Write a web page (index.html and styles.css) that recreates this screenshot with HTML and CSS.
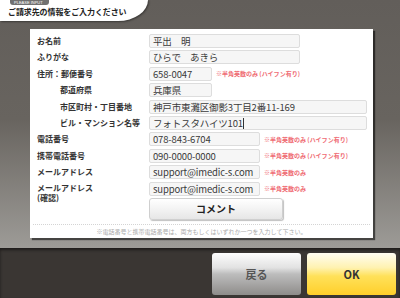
FILE: index.html
```
<!DOCTYPE html>
<html lang="ja">
<head>
    <meta charset="UTF-8">
    <title>ご請求先の情報をご入力ください</title>
    <link rel="stylesheet" href="styles.css">
</head>
<body>
    <div class="header">
        <div class="tab">
            <span class="tag">PLEASE INPUT</span>
            <h1>ご請求先の情報をご入力ください</h1>
        </div>
    </div>
    <div class="main">
        <div class="card">
            <div class="form">
                <div class="label">お名前</div>
                <div class="field"><span class="input w-name">平出　明</span></div>

                <div class="label">ふりがな</div>
                <div class="field"><span class="input w-name">ひらで　あきら</span></div>

                <div class="label">住所：郵便番号</div>
                <div class="field"><span class="input w-zip">658-0047</span><span class="note">※半角英数のみ (ハイフン有り)</span></div>

                <div class="label sub">都道府県</div>
                <div class="field"><span class="input w-zip">兵庫県</span></div>

                <div class="label sub">市区町村・丁目番地</div>
                <div class="field"><span class="input w-long">神戸市東灘区御影3丁目2番11-169</span></div>

                <div class="label sub">ビル・マンション名等</div>
                <div class="field"><span class="input w-long">フォトスタハイツ101<span class="caret"></span></span></div>

                <div class="label">電話番号</div>
                <div class="field"><span class="input w-mid">078-843-6704</span><span class="note">※半角英数のみ (ハイフン有り)</span></div>

                <div class="label">携帯電話番号</div>
                <div class="field"><span class="input w-mid">090-0000-0000</span><span class="note">※半角英数のみ (ハイフン有り)</span></div>

                <div class="label">メールアドレス</div>
                <div class="field"><span class="input w-mid">support@imedic-s.com</span><span class="note">※半角英数のみ</span></div>

                <div class="label two">メールアドレス<br>(確認)</div>
                <div class="field"><span class="input w-mid">support@imedic-s.com</span><span class="note">※半角英数のみ</span></div>

                <div class="label"></div>
                <div class="field"><button class="comment">コメント</button></div>
            </div>
            <div class="footnote">※電話番号と携帯電話番号は、両方もしくはいずれか一つを入力して下さい。</div>
        </div>
    </div>
    <div class="footer">
        <button class="btn btn-back">戻る</button>
        <button class="btn btn-ok">OK</button>
    </div>
</body>
</html>
```
FILE: styles.css
```
html, body {
    margin: 0;
    width: 400px;
    height: 298px;
    overflow: hidden;
    font-family: "Noto Sans CJK JP", "Noto Sans", sans-serif;
    color: #333;
}
body {
    background: linear-gradient(to bottom, #625e5a, #68645f 40%, #9d9b97 248px);
}
.header {
    height: 29px;
}
.tab {
    display: flex;
    flex-direction: column;
    align-items: flex-start;
    width: 148px;
    height: 21px;
    background: #fff;
    border-bottom-right-radius: 30px 21px;
    box-shadow: 1px 1px 2px rgba(0, 0, 0, 0.4);
    padding-left: 8px;
    box-sizing: border-box;
}
.tag {
    background: #707070;
    color: #fff;
    font-family: "Liberation Sans", sans-serif;
    font-size: 4px;
    line-height: 5px;
    padding: 0 6px 0 4px;
    margin-left: 2px;
    border-radius: 0 0 3px 3px;
}
.tab h1 {
    margin: 2px 0 0;
    font-size: 8px;
    line-height: 10px;
    font-weight: 700;
    color: #222;
    letter-spacing: -0.1px;
    white-space: nowrap;
}
.main {
    padding-left: 30px;
    height: 219px;
}
.card {
    width: 343px;
    height: 209px;
    background: #fff;
    box-shadow: 2px 2px 1px rgba(0, 0, 0, 0.55);
    padding: 5px 0 0 7px;
    box-sizing: border-box;
}
.form {
    display: grid;
    grid-template-columns: 112px 1fr;
    grid-template-rows: repeat(10, 14px) 22px;
    row-gap: 2.4px;
}
.label {
    font-size: 8px;
    font-weight: 700;
    line-height: 13px;
    color: #333;
    white-space: nowrap;
}
.label.sub {
    padding-left: 23px;
}
.label.two {
    line-height: 10px;
    margin-top: 1px;
}
.field {
    display: flex;
    align-items: center;
}
.input {
    height: 14px;
    box-sizing: border-box;
    border: 1px solid #ddd;
    border-radius: 2px;
    background: #f6f6f6;
    font-size: 9.5px;
    line-height: 12px;
    padding-left: 3px;
    color: #3a3a3a;
    letter-spacing: -0.15px;
    white-space: nowrap;
    overflow: hidden;
}
.w-name { width: 151px; }
.w-zip { width: 63px; }
.w-long { width: 218px; }
.w-mid { width: 111px; }
.caret {
    display: inline-block;
    width: 1px;
    height: 11px;
    background: #333;
    vertical-align: -2px;
}
.note {
    margin-left: 4px;
    font-size: 6px;
    font-weight: 700;
    color: #ef6b73;
    white-space: nowrap;
}
.comment {
    width: 134px;
    height: 22px;
    margin: 0;
    border: 1px solid #cfcfcf;
    border-radius: 3px;
    background: linear-gradient(to bottom, #ffffff, #f3f3f3 50%, #e6e6e6);
    box-shadow: 1px 1px 1px rgba(0, 0, 0, 0.25);
    font-family: "Noto Sans CJK JP", sans-serif;
    font-size: 10px;
    font-weight: 700;
    color: #222;
}
.footnote {
    margin: 4px 3px 0 -4px;
    border-top: 1px dotted #d4d4d4;
    padding-top: 3px;
    text-align: center;
    font-size: 6px;
    line-height: 8px;
    color: #aaa;
}
.footer {
    height: 50px;
    background: #3a3633;
    box-shadow: inset 0 2px 3px rgba(0, 0, 0, 0.5);
    display: flex;
    justify-content: flex-end;
    gap: 6px;
    padding: 5px 4px 0 0;
    box-sizing: border-box;
}
.btn {
    width: 89px;
    height: 42px;
    margin: 0;
    border: none;
    border-radius: 3px;
    font-family: "Noto Sans CJK JP", "Liberation Sans", sans-serif;
    font-size: 11px;
    font-weight: 700;
}
.btn-back {
    background: linear-gradient(to bottom, #fdfdfd, #e2e2e2 35%, #bdbdbd 50%, #8e8c8a);
    color: #555;
}
.btn-ok {
    background: linear-gradient(to bottom, #fffdf2, #fff2b0 35%, #ffe15a 55%, #ffcf2a);
    color: #333;
}
```
